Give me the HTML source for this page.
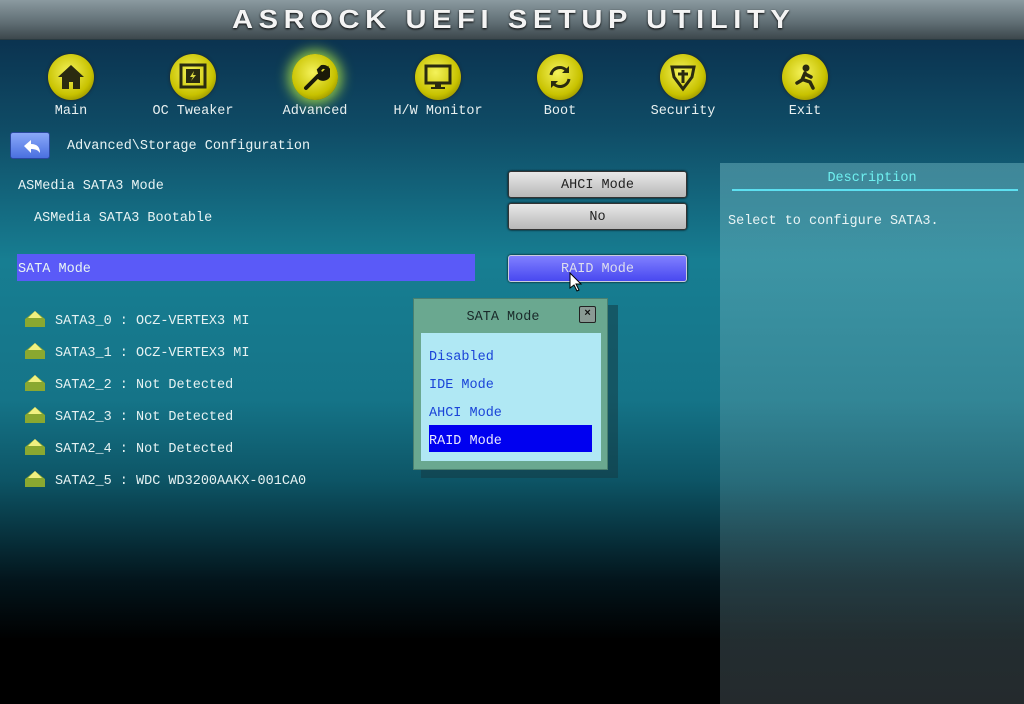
<!DOCTYPE html>
<html><head><meta charset="utf-8"><style>
*{margin:0;padding:0;box-sizing:border-box}
body{width:1024px;height:704px;overflow:hidden;position:relative;font-family:"Liberation Mono",monospace;font-size:13.5px;line-height:19px;color:#e8f4f4;
background:linear-gradient(180deg,#0b3350 40px,#0f4c66 130px,#177e92 260px,#157488 400px,#0d5566 480px,#03151c 580px,#000 640px,#000 704px)}
.hdr{position:absolute;left:0;top:0;width:1024px;height:40px;background:linear-gradient(180deg,#8b9aa0,#5e6c72 60%,#3c474c);border-bottom:1px solid #2a3a40}
.title{position:absolute;left:232px;top:4px;font-family:"Liberation Sans",sans-serif;font-weight:bold;font-size:26px;line-height:30px;letter-spacing:5px;color:#f4f4f4;text-shadow:0 1px 2px #000;transform:scaleX(1.12);transform-origin:left}
.ic{position:absolute;top:54px;width:46px;height:46px;border-radius:50%;background:radial-gradient(circle at 45% 40%,#f4f25a,#c8c200 60%,#6a6400);box-shadow:0 0 3px #222}
.ic svg{position:absolute;left:8px;top:8px}
.glow{box-shadow:0 0 12px 4px rgba(200,255,60,.7)}
.lb{position:absolute;top:102px;width:120px;text-align:center;color:#e8f0f0}
.abs{position:absolute}
.btn{position:absolute;left:508px;width:179px;height:27px;border-radius:3px;background:linear-gradient(180deg,#e8e8e8,#b8b8b8);border:1px solid #333;color:#222;text-align:center;line-height:27px;box-shadow:0 0 2px #000}
.drv{position:absolute;left:55px;color:#e6f2f2}
.hs{position:absolute;left:24px;width:22px;height:18px}
</style></head><body>
<div class="hdr"><div class="title">ASROCK UEFI SETUP UTILITY</div></div>

<div class="ic" style="left:48px"><svg width="30" height="30" viewBox="0 0 30 30"><path d="M15 3L2 15h4v12h7v-7h4v7h7V15h4z" fill="#2a2a10"/></svg></div>
<div class="ic" style="left:170px"><svg width="30" height="30" viewBox="0 0 30 30"><rect x="3" y="3" width="24" height="22" fill="none" stroke="#2a2a10" stroke-width="3"/><rect x="8" y="7" width="14" height="14" fill="#2a2a10"/><path d="M16 9l-4 6h3l-2 4 5-6h-3z" fill="#dcd840"/></svg></div>
<div class="ic glow" style="left:292px"><svg width="30" height="30" viewBox="0 0 30 30"><path d="M6 26l12-12M18 14a6 6 0 1 0 4-9l-3 3 1 3 3 1 3-3a6 6 0 0 1-8 5" stroke="#1a1a08" stroke-width="4" fill="none" stroke-linecap="round"/></svg></div>
<div class="ic" style="left:415px"><svg width="30" height="30" viewBox="0 0 30 30"><rect x="3" y="4" width="24" height="17" fill="none" stroke="#2a2a10" stroke-width="3"/><path d="M12 21v4h-4v2h14v-2h-4v-4" fill="#2a2a10"/></svg></div>
<div class="ic" style="left:537px"><svg width="30" height="30" viewBox="0 0 30 30"><path d="M6 13a9 9 0 0 1 16-4M24 17a9 9 0 0 1-16 4" stroke="#2a2a10" stroke-width="3" fill="none"/><path d="M24 4v7h-7zM6 26v-7h7z" fill="#2a2a10"/></svg></div>
<div class="ic" style="left:660px"><svg width="30" height="30" viewBox="0 0 30 30"><path d="M4 5h22l-2 10-9 12-9-12z" fill="none" stroke="#2a2a10" stroke-width="3"/><path d="M15 8v13M10 12h10" stroke="#2a2a10" stroke-width="3"/></svg></div>
<div class="ic" style="left:782px"><svg width="30" height="30" viewBox="0 0 30 30"><circle cx="16" cy="6" r="3.5" fill="#2a2a10"/><path d="M15 11l-3 7-5 3M14 18l6 2 3 6M15 12l6 3" stroke="#2a2a10" stroke-width="3.5" fill="none" stroke-linecap="round"/></svg></div>

<div class="lb" style="left:11px">Main</div>
<div class="lb" style="left:133px">OC Tweaker</div>
<div class="lb" style="left:255px">Advanced</div>
<div class="lb" style="left:378px">H/W Monitor</div>
<div class="lb" style="left:500px">Boot</div>
<div class="lb" style="left:623px">Security</div>
<div class="lb" style="left:745px">Exit</div>

<div class="abs" style="left:10px;top:132px;width:40px;height:27px;border-radius:3px;background:linear-gradient(180deg,#8aa8f8,#4a70e0);border:1px solid #2a48a0"><svg width="40" height="27" viewBox="0 0 40 27"><path d="M13 13l7-6v4c6 0 9 3 9 9-2-3-5-4-9-4v4z" fill="#fff"/></svg></div>
<div class="abs" style="left:67px;top:137px">Advanced\Storage Configuration</div>

<div class="abs" style="left:720px;top:163px;width:304px;height:541px;background:linear-gradient(180deg,rgba(120,190,200,.45),rgba(90,150,160,.35) 60%,rgba(60,70,75,.6))"></div>
<div class="abs" style="left:720px;top:169px;width:304px;text-align:center;color:#6ff0f0">Description</div>
<div class="abs" style="left:732px;top:189px;width:286px;height:2px;background:#5de0f0"></div>
<div class="abs" style="left:728px;top:212px">Select to configure SATA3.</div>

<div class="abs" style="left:18px;top:177px">ASMedia SATA3 Mode</div>
<div class="abs" style="left:34px;top:209px">ASMedia SATA3 Bootable</div>
<div class="abs" style="left:17px;top:254px;width:458px;height:27px;background:#5a5af8"></div>
<div class="abs" style="left:18px;top:260px">SATA Mode</div>
<div class="btn" style="top:171px">AHCI Mode</div>
<div class="btn" style="top:203px">No</div>
<div class="btn" style="top:255px;background:linear-gradient(180deg,#8080ff,#4848f0);color:#dde;border-color:#ccd">RAID Mode</div>
<svg class="abs" style="left:569px;top:272px" width="14" height="20" viewBox="0 0 14 20"><path d="M1 1v15l4-3 3 6 2-1-3-6h5z" fill="#fff" stroke="#000"/></svg>

<div class="hs" style="top:310px"><svg width="22" height="18"><path d="M11 1L1 9v8h20V9z" fill="#8aa830"/><path d="M11 1L4 8h14z" fill="#f0f080"/></svg></div>
<div class="hs" style="top:342px"><svg width="22" height="18"><path d="M11 1L1 9v8h20V9z" fill="#8aa830"/><path d="M11 1L4 8h14z" fill="#f0f080"/></svg></div>
<div class="hs" style="top:374px"><svg width="22" height="18"><path d="M11 1L1 9v8h20V9z" fill="#8aa830"/><path d="M11 1L4 8h14z" fill="#f0f080"/></svg></div>
<div class="hs" style="top:406px"><svg width="22" height="18"><path d="M11 1L1 9v8h20V9z" fill="#8aa830"/><path d="M11 1L4 8h14z" fill="#f0f080"/></svg></div>
<div class="hs" style="top:438px"><svg width="22" height="18"><path d="M11 1L1 9v8h20V9z" fill="#8aa830"/><path d="M11 1L4 8h14z" fill="#f0f080"/></svg></div>
<div class="hs" style="top:470px"><svg width="22" height="18"><path d="M11 1L1 9v8h20V9z" fill="#8aa830"/><path d="M11 1L4 8h14z" fill="#f0f080"/></svg></div>
<div class="drv" style="top:312px">SATA3_0 : OCZ-VERTEX3 MI</div>
<div class="drv" style="top:344px">SATA3_1 : OCZ-VERTEX3 MI</div>
<div class="drv" style="top:376px">SATA2_2 : Not Detected</div>
<div class="drv" style="top:408px">SATA2_3 : Not Detected</div>
<div class="drv" style="top:440px">SATA2_4 : Not Detected</div>
<div class="drv" style="top:472px">SATA2_5 : WDC WD3200AAKX-001CA0</div>

<div class="abs" style="left:421px;top:305px;width:197px;height:173px;background:rgba(20,60,70,.55)"></div>
<div class="abs" style="left:413px;top:298px;width:195px;height:172px;background:#6aa890;border:1px solid #4a8070"></div>
<div class="abs" style="left:413px;top:308px;width:180px;text-align:center;color:#1a2a2a">SATA Mode</div>
<div class="abs" style="left:579px;top:306px;width:17px;height:17px;background:#8a9a94;border:1px solid #222;border-radius:2px;color:#111;font-size:11px;line-height:15px;text-align:center;font-weight:bold">×</div>
<div class="abs" style="left:421px;top:333px;width:180px;height:128px;background:#b0e8f4"></div>
<div class="abs" style="left:429px;top:425px;width:163px;height:27px;background:#0000f0"></div>
<div class="abs" style="left:429px;top:348px;color:#1a44d8">Disabled</div>
<div class="abs" style="left:429px;top:376px;color:#1a44d8">IDE Mode</div>
<div class="abs" style="left:429px;top:404px;color:#1a44d8">AHCI Mode</div>
<div class="abs" style="left:429px;top:432px;color:#e8e8ff">RAID Mode</div>
</body></html>
